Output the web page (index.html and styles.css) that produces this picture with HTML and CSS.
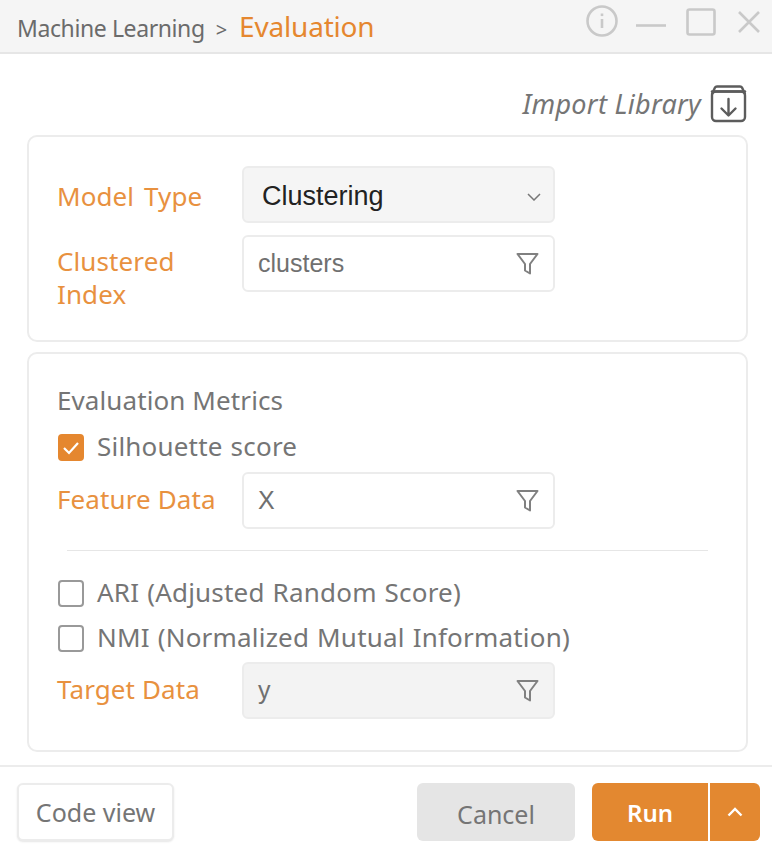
FILE: index.html
```html
<!DOCTYPE html>
<html lang="en">
<head>
  <meta charset="UTF-8" />
  <title>Evaluation</title>
  <link rel="stylesheet" href="styles.css">
</head>
<body>
  <div class="window">

    <!-- TITLE BAR -->
    <header class="titlebar">
      <div class="crumbs">
        <span class="crumb-parent">Machine Learning</span>
        <span class="crumb-sep">&gt;</span>
        <span class="crumb-current">Evaluation</span>
      </div>
      <div class="win-icons">
        <svg class="icon-info" width="32" height="32" viewBox="0 0 32 32" fill="none" stroke="#c9c9c9" stroke-width="2.6">
          <circle cx="16" cy="16" r="14.5"/>
          <path d="M16 14v9"/>
          <path d="M16 8.500v2.600"/>
        </svg>
        <svg class="icon-min" width="30" height="32" viewBox="0 0 30 32" fill="none" stroke="#c9c9c9" stroke-width="2.6">
          <path d="M0 20.500h30"/>
        </svg>
        <svg class="icon-max" width="30" height="28" viewBox="0 0 30 28" fill="none" stroke="#c9c9c9" stroke-width="2.6">
          <rect x="1.500" y="1.500" width="27" height="25" rx="2"/>
        </svg>
        <svg class="icon-close" width="24" height="24" viewBox="0 0 24 24" fill="none" stroke="#c9c9c9" stroke-width="2.6">
          <path d="M2 2l20 20M22 2L2 22"/>
        </svg>
      </div>
    </header>

    <main class="content">
      <div class="import-row">
        <span class="import-label">Import Library</span>
        <svg width="37" height="38" viewBox="0 0 37 38" fill="none" stroke="#5c5c5c" stroke-width="2.4" stroke-linejoin="round" stroke-linecap="round">
          <path d="M2 9l3-6.500Q5.500 1.500 7 1.500h23q1.500 0 2 1L35 9"/>
          <path d="M2 6.500h33"/>
          <rect x="2" y="6.500" width="33" height="29.500" rx="4"/>
          <path d="M18.500 14v16M11.500 23.500l7 7 7-7"/>
        </svg>
      </div>

      <!-- MODEL -->
      <section class="card card-model">
        <div class="row">
          <label class="row-label label-model">Model Type</label>
          <div class="control control-select">
            <span class="select-text">Clustering</span>
            <svg class="chevron" width="14" height="8" viewBox="0 0 14 8" fill="none" stroke="#777" stroke-width="1.500"><path d="M1 1l6 6 6-6"/></svg>
          </div>
        </div>
        <div class="row row-top">
          <label class="row-label label-two">Clustered Index</label>
          <div class="control">
            <span>clusters</span>
            <svg class="filter" width="23" height="24" viewBox="0 0 23 24" fill="none" stroke="#808080" stroke-width="2" stroke-linejoin="round"><path d="M1.500 2h20l-7.500 10v9.500l-5-3V12z"/></svg>
          </div>
        </div>
      </section>

      <!-- METRICS -->
      <section class="card card-metrics">
        <div class="metrics-title">Evaluation Metrics</div>
        <div class="check-row">
          <span class="check checked">
            <svg width="20" height="16" viewBox="0 0 20 16" fill="none" stroke="#fff" stroke-width="2.200"><path d="M3 8l5 5 9-10"/></svg>
          </span>
          <span class="check-label">Silhouette score</span>
        </div>
        <div class="row row-feature">
          <label class="row-label">Feature Data</label>
          <div class="control">
            <span>X</span>
            <svg class="filter" width="23" height="24" viewBox="0 0 23 24" fill="none" stroke="#808080" stroke-width="2" stroke-linejoin="round"><path d="M1.500 2h20l-7.500 10v9.500l-5-3V12z"/></svg>
          </div>
        </div>
        <div class="divider"></div>
        <div class="check-row">
          <span class="check"></span>
          <span class="check-label">ARI (Adjusted Random Score)</span>
        </div>
        <div class="check-row">
          <span class="check"></span>
          <span class="check-label">NMI (Normalized Mutual Information)</span>
        </div>
        <div class="row row-target">
          <label class="row-label">Target Data</label>
          <div class="control control-disabled">
            <span>y</span>
            <svg class="filter" width="23" height="24" viewBox="0 0 23 24" fill="none" stroke="#808080" stroke-width="2" stroke-linejoin="round"><path d="M1.500 2h20l-7.500 10v9.500l-5-3V12z"/></svg>
          </div>
        </div>
      </section>
    </main>

    <!-- FOOTER -->
    <footer class="footer">
      <button class="btn btn-code">Code view</button>
      <div class="footer-right">
        <button class="btn btn-cancel">Cancel</button>
        <div class="run-group">
          <button class="btn btn-run">Run</button>
          <button class="btn btn-more">
            <svg width="16" height="10" viewBox="0 0 16 10" fill="none" stroke="#fff" stroke-width="2.400"><path d="M1.500 8.500L8 2l6.500 6.500"/></svg>
          </button>
        </div>
      </div>
    </footer>
  </div>
</body>
</html>
```

FILE: styles.css
```css
html, body {
  margin: 0;
  padding: 0;
}

body {
  font-family: "Noto Sans", "Open Sans", sans-serif;
  background-color: white;
  color: #757575;
}

.window {
  width: 772px;
  height: 850px;
  overflow: hidden;
  display: flex;
  flex-direction: column;
}

.titlebar {
  height: 52px;
  flex: none;
  display: flex;
  justify-content: space-between;
  background-color: #f5f5f5;
  border-bottom: 2px solid #e6e6e6;
  padding-left: 17px;
}

.crumbs {
  display: flex;
  align-items: baseline;
  padding-top: 7px;
}

.crumb-parent {
  font-size: 23px;
  color: #6b6b6b;
  letter-spacing: -0.4px;
}

.crumb-sep {
  font-size: 20px;
  margin-left: 11px;
  color: #6b6b6b;
}

.crumb-current {
  font-size: 28px;
  margin-left: 12px;
  color: #e5872f;
  letter-spacing: -0.2px;
}

.win-icons {
  display: flex;
  align-items: flex-start;
  padding: 5px 11px 0 0;
}

.icon-min {
  margin-left: 18px;
}

.icon-max {
  margin-left: 20px;
  margin-top: 3px;
}

.icon-close {
  margin-left: 21px;
  margin-top: 5px;
}

.content {
  flex: 1;
  padding: 0 24px 0 27px;
}

.import-row {
  height: 81px;
  display: flex;
  justify-content: flex-end;
  align-items: flex-start;
  gap: 9px;
  padding-top: 31px;
  box-sizing: border-box;
  margin-right: 1px;
}

.import-label {
  font-size: 27px;
  font-style: italic;
  color: #757575;
  line-height: 38px;
  letter-spacing: 0.3px;
}

.card {
  border: 2px solid #ececec;
  border-radius: 10px;
  box-sizing: border-box;
  padding-left: 28px;
}

.card-model {
  height: 207px;
  padding-top: 29px;
}

.card-metrics {
  height: 400px;
  margin-top: 10px;
  padding-top: 30px;
}

.row {
  display: flex;
  align-items: center;
}

.row-top {
  align-items: flex-start;
  margin-top: 12px;
}

.row-label {
  width: 185px;
  flex: none;
  font-size: 26px;
  line-height: 33px;
  padding-bottom: 3px;
  color: #e8913f;
  letter-spacing: 0.1px;
}

.label-model {
  padding-top: 4px;
  padding-bottom: 0;
  word-spacing: 3px;
}

.label-two {
  width: 130px;
  margin-right: 55px;
  padding-top: 10px;
  padding-bottom: 0;
}

.control {
  width: 313px;
  height: 57px;
  box-sizing: border-box;
  border: 2px solid #ececec;
  border-radius: 6px;
  display: flex;
  justify-content: space-between;
  align-items: center;
  padding: 0 14px;
  font-family: "Liberation Sans", Arial, sans-serif;
  font-size: 25px;
  color: #707070;
  background-color: white;
}

.control-select {
  background-color: #f5f5f5;
  color: #222;
  padding: 4px 12px 0 18px;
  font-size: 27px;
}

.control-disabled {
  background-color: #f3f3f3;
}

.metrics-title {
  font-size: 26px;
  line-height: 33px;
  letter-spacing: 0.1px;
  margin-bottom: 8px;
}

.check-row {
  height: 45px;
  display: flex;
  align-items: center;
  gap: 13px;
  font-size: 26px;
  letter-spacing: 0.2px;
  word-spacing: 1px;
}

.check-label {
  padding-bottom: 3px;
}

.check {
  width: 26px;
  height: 27px;
  margin-left: 1px;
  flex: none;
  box-sizing: border-box;
  border: 2px solid #999;
  border-radius: 4px;
  display: flex;
  align-items: center;
  justify-content: center;
  background-color: white;
}

.check.checked {
  background-color: #e5872f;
  border-color: #e5872f;
}

.row-feature {
  margin-top: 2px;
}

.divider {
  height: 1px;
  background-color: #e6e6e6;
  margin: 21px 38px 20px 10px;
}

.row-target {
  margin-top: 1px;
}

.footer {
  flex: none;
  height: 85px;
  box-sizing: border-box;
  border-top: 2px solid #ececec;
  display: flex;
  justify-content: space-between;
  align-items: flex-start;
  padding: 16px 12px 0 17px;
}

.footer-right {
  display: flex;
  gap: 17px;
}

.btn {
  height: 58px;
  box-sizing: border-box;
  border: none;
  border-radius: 6px;
  padding: 0;
  font-family: "Noto Sans", "Open Sans", sans-serif;
  font-size: 25px;
}

.btn-code {
  width: 157px;
  background-color: white;
  border: 2px solid #ececec;
  color: #757575;
  box-shadow: 0 1px 2px rgba(0,0,0,0.1);
}

.btn-cancel {
  width: 158px;
  background-color: #e5e5e5;
  color: #757575;
  padding-top: 4px;
}

.run-group {
  display: flex;
}

.btn-run {
  width: 116px;
  background-color: #e38830;
  color: white;
  font-weight: 600;
  border-radius: 6px 0 0 6px;
  font-size: 24px;
}

.btn-more {
  width: 52px;
  display: flex;
  align-items: center;
  justify-content: center;
  background-color: #e38830;
  border-left: 2px solid white;
  border-radius: 0 6px 6px 0;
}
```
